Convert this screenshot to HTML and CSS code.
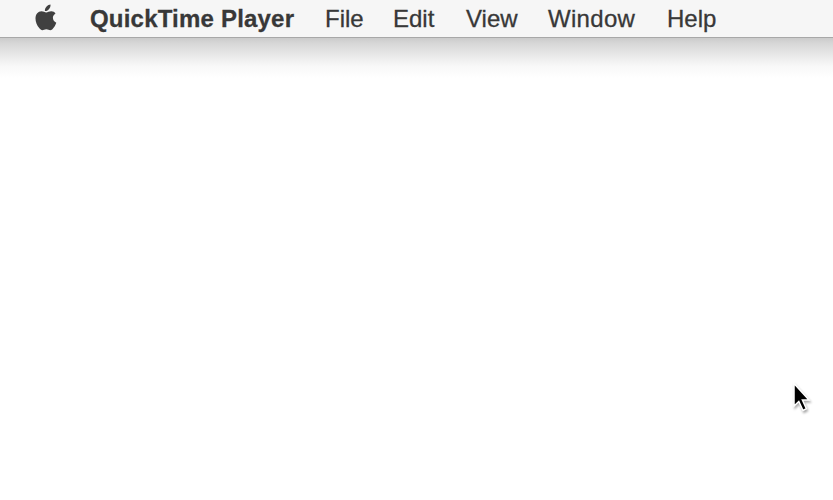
FILE: index.html
```html
<!DOCTYPE html>
<html lang="en">
<head>
<meta charset="utf-8">
<title>QuickTime Player</title>
<link rel="stylesheet" href="styles.css">
</head>
<body>
<nav class="menubar">
  <svg class="apple" viewBox="0 0 22 27" aria-label="Apple"><path d="M15.500.5c.2 2-.6 3.500-1.600 4.700-1.100 1.300-2.600 2-4 1.900-.2-1.900.6-3.500 1.700-4.700C12.600 1.300 14.200.6 15.500.5zM20.500 9.400c-1.700 1.100-2.600 2.500-2.600 4.400 0 2.300 1.300 4 3.400 4.900-.7 2.200-1.900 4.300-3.300 5.900-.8 1-1.600 1.600-2.700 1.600-1.400 0-2.100-.9-4-.9s-2.600.9-4 .9c-1.100 0-2-.8-2.900-1.900C1.800 21.500.5 17.900.5 14.600c0-4.400 2.600-7.300 6-7.300 1.900 0 3.400 1.200 4.800 1.200 1.300 0 3-1.300 5.200-1.200 1.600.1 3 .8 4 2.100z"/></svg>
  <span class="item app">QuickTime Player</span>
  <span class="item file">File</span>
  <span class="item edit">Edit</span>
  <span class="item view">View</span>
  <span class="item window">Window</span>
  <span class="item help">Help</span>
</nav>
<main class="desktop">
  <svg class="cursor" viewBox="0 0 24 34"><path d="M3 2.500v22.500l4.800-4.500 4.200 9 3.400-1.800-4-8.700H18z"/></svg>
</main>
</body>
</html>
```
FILE: styles.css
```css
body {
  margin: 0;
  height: 500px;
  overflow: hidden;
  display: flex;
  flex-direction: column;
  background: #fff;
  font-family: "Liberation Sans", Arial, sans-serif;
}
.menubar {
  box-sizing: border-box;
  height: 38px;
  padding-left: 35px;
  display: flex;
  align-items: center;
  background: #f6f6f6;
  border-bottom: 1px solid #a8a8a8;
  color: #383838;
}
.apple { width: 22px; height: 27px; margin: 0 33px 3px 0; fill: #404040; }
.item {
  font-size: 24px;
  line-height: 36px;
  white-space: nowrap;
  -webkit-text-stroke: 0.3px #383838;
}
.app { font-weight: bold; width: 235px; letter-spacing: 0.2px; }
.file { width: 68px; }
.edit { width: 73px; }
.view { width: 82px; }
.window { width: 119px; letter-spacing: 0.3px; }
.desktop {
  position: relative;
  flex: 1;
  background: linear-gradient(#cbcbcb, #d6d6d6 5px, #e4e4e4 14px, #f8f8f8 28px, #fff 40px);
}
.cursor {
  position: absolute;
  left: 791px;
  top: 343px;
  width: 24px;
  height: 34px;
  fill: #000;
  stroke: #fff;
  stroke-width: 1.5;
  filter: drop-shadow(1px 2px 1px #0005);
}
```
